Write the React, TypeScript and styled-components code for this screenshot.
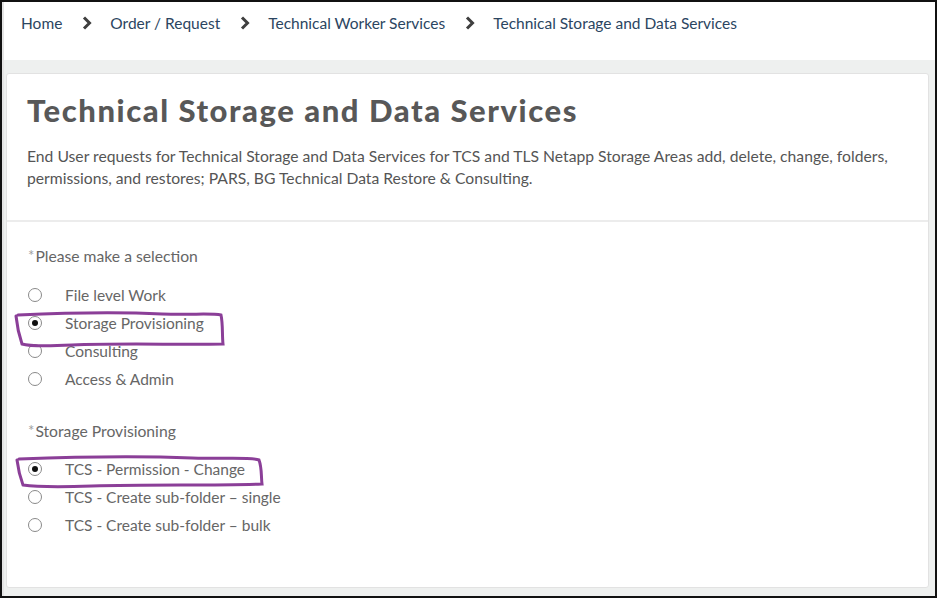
import React from "react";
import styled, { createGlobalStyle } from "styled-components";

const Global = createGlobalStyle`
  html, body { margin: 0; padding: 0; background: #fff; }
  * { box-sizing: border-box; }
`;

const Frame = styled.div`
  position: relative;
  width: 937px;
  height: 598px;
  border: 2px solid #111;
  background: #eef0ef;
  display: flex;
  flex-direction: column;
  font-family: Lato, "Open Sans", sans-serif;
  overflow: hidden;
`;

const TopBar = styled.nav`
  height: 58px;
  background: #fff;
  display: flex;
  align-items: center;
  padding: 0 0 16px 17px;
  border-left: 2px solid #e4e4e4;
`;

const Crumb = styled.span`
  font-size: 15.5px;
  color: #2b4561;
`;

const Chevron = styled.span`
  display: inline-flex;
  width: 48px;
  justify-content: center;
  padding-left: 2px;
`;

const Main = styled.main`
  flex: 1;
  padding: 13px 6px 8px 2px;
  display: flex;
  border-left: 2px solid #e4e4e4;
`;

const Card = styled.section`
  flex: 1;
  background: #fff;
  border: 1px solid #e2e2e2;
  border-radius: 3px;
  display: flex;
  flex-direction: column;
`;

const CardHeader = styled.header`
  padding: 18px 20px 31px;
  border-bottom: 2px solid #ececec;
`;

const Title = styled.h1`
  margin: 0;
  font-size: 31px;
  line-height: 36px;
  font-weight: 900;
  color: #585858;
  letter-spacing: 1.55px;
`;

const Description = styled.p`
  margin: 17px 0 0;
  font-size: 15.7px;
  line-height: 22px;
  color: #555;
  max-width: 880px;
`;

const Form = styled.div`
  padding: 23px 20px 0 21px;
  display: flex;
  flex-direction: column;
`;

const Group = styled.fieldset<{ $gap?: number }>`
  border: 0;
  margin: 0 0 ${(p) => p.$gap ?? 0}px;
  padding: 0;
`;

const Legend = styled.div<{ $after?: number }>`
  font-size: 15.7px;
  line-height: 22px;
  color: #666;
  margin-bottom: ${(p) => p.$after ?? 14}px;
  display: flex;
  align-items: flex-start;
`;

const Star = styled.span`
  font-size: 15px;
  color: #a0a0a0;
  line-height: 15px;
  margin: 3px 1px 0 0;
`;

const Row = styled.label`
  height: 28px;
  display: flex;
  align-items: center;
  font-size: 15.5px;
  color: #666;
`;

const Radio = styled.span<{ $checked?: boolean }>`
  width: 14px;
  height: 14px;
  border-radius: 50%;
  border: 1px solid #8a8a8a;
  background: #fff;
  margin-right: 23px;
  display: inline-flex;
  align-items: center;
  justify-content: center;
  &::after {
    content: "";
    width: 6px;
    height: 6px;
    border-radius: 50%;
    background: ${(p) => (p.$checked ? "#111" : "transparent")};
  }
`;

const Annotation = styled.svg`
  position: absolute;
  left: 0;
  top: 0;
  pointer-events: none;
`;

const ChevronIcon = () => (
  <svg width="10" height="14" viewBox="0 0 10 14">
    <path d="M2 1.5 L7.5 7 L2 12.5" fill="none" stroke="#3f3f3f" strokeWidth="3" strokeLinejoin="miter" />
  </svg>
);

const crumbs = [
  "Home",
  "Order / Request",
  "Technical Worker Services",
  "Technical Storage and Data Services",
];

const groupA = [
  { label: "File level Work", checked: false },
  { label: "Storage Provisioning", checked: true },
  { label: "Consulting", checked: false },
  { label: "Access & Admin", checked: false },
];

const groupB = [
  { label: "TCS - Permission - Change", checked: true },
  { label: "TCS - Create sub-folder \u2013 single", checked: false },
  { label: "TCS - Create sub-folder \u2013 bulk", checked: false },
];

export default function App() {
  return (
    <>
      <Global />
      <Frame>
        <TopBar>
          {crumbs.map((c, i) => (
            <React.Fragment key={c}>
              {i > 0 && (
                <Chevron>
                  <ChevronIcon />
                </Chevron>
              )}
              <Crumb>{c}</Crumb>
            </React.Fragment>
          ))}
        </TopBar>
        <Main>
          <Card>
            <CardHeader>
              <Title>Technical Storage and Data Services</Title>
              <Description>
                End User requests for Technical Storage and Data Services for TCS and TLS Netapp Storage Areas add,
                delete, change, folders, permissions, and restores; PARS, BG Technical Data Restore &amp; Consulting.
              </Description>
            </CardHeader>
            <Form>
              <Group $gap={27}>
                <Legend>
                  <Star>*</Star>Please make a selection
                </Legend>
                {groupA.map((o) => (
                  <Row key={o.label}>
                    <Radio $checked={o.checked} />
                    {o.label}
                  </Row>
                ))}
              </Group>
              <Group>
                <Legend $after={13}>
                  <Star>*</Star>Storage Provisioning
                </Legend>
                {groupB.map((o) => (
                  <Row key={o.label}>
                    <Radio $checked={o.checked} />
                    {o.label}
                  </Row>
                ))}
              </Group>
            </Form>
          </Card>
        </Main>
        <Annotation width="937" height="598" viewBox="0 0 937 598">
          <path
            d="M16 313 C60 311 120 310 160 312 C190 313 210 311 219 313 C221 322 220 333 221 342 C180 343 120 341 70 343 C50 344 30 345 20 342 C17 333 15 324 14 314"
            fill="none"
            stroke="#8b3f98"
            strokeWidth="3"
            strokeLinecap="round"
          />
          <path
            d="M17 457 C70 455 140 454 190 456 C230 457 250 455 257 458 C260 466 259 474 260 482 C210 484 150 482 90 484 C60 485 35 485 21 483 C18 475 16 466 15 458"
            fill="none"
            stroke="#8b3f98"
            strokeWidth="3"
            strokeLinecap="round"
          />
        </Annotation>
      </Frame>
    </>
  );
}
